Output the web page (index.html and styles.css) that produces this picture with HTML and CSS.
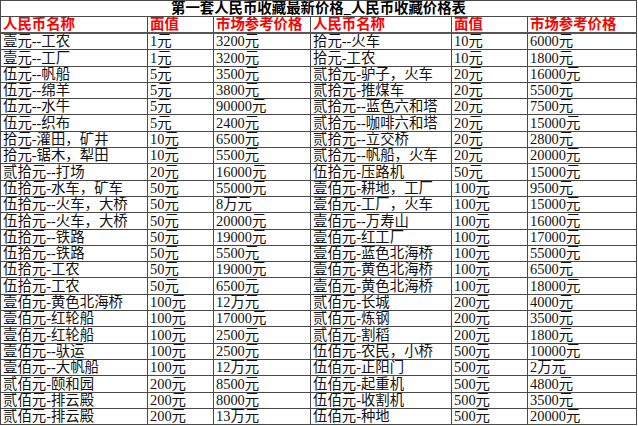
FILE: index.html
```html
<!DOCTYPE html>
<html lang="zh-CN">
<head>
<meta charset="utf-8">
<title>第一套人民币收藏最新价格</title>
<link rel="stylesheet" href="styles.css">
</head>
<body>
<table class="price-table">
  <colgroup>
    <col class="c-name"><col class="c-face"><col class="c-price">
    <col class="c-name2"><col class="c-face2"><col class="c-price2">
  </colgroup>
  <thead>
    <tr class="title-row"><th colspan="6">第一套人民币收藏最新价格_人民币收藏价格表</th></tr>
    <tr class="head-row">
      <th>人民币名称</th><th>面值</th><th>市场参考价格</th>
      <th>人民币名称</th><th>面值</th><th>市场参考价格</th>
    </tr>
  </thead>
  <tbody>
    <tr><td>壹元--工农</td><td>1元</td><td>3200元</td><td>拾元--火车</td><td>10元</td><td>6000元</td></tr>
    <tr><td>壹元--工厂</td><td>1元</td><td>3200元</td><td>拾元-工农</td><td>10元</td><td>1800元</td></tr>
    <tr><td>伍元--帆船</td><td>5元</td><td>3500元</td><td>贰拾元-驴子，火车</td><td>20元</td><td>16000元</td></tr>
    <tr><td>伍元--绵羊</td><td>5元</td><td>3800元</td><td>贰拾元-推煤车</td><td>20元</td><td>5500元</td></tr>
    <tr><td>伍元--水牛</td><td>5元</td><td>90000元</td><td>贰拾元--蓝色六和塔</td><td>20元</td><td>7500元</td></tr>
    <tr><td>伍元--织布</td><td>5元</td><td>2400元</td><td>贰拾元--咖啡六和塔</td><td>20元</td><td>15000元</td></tr>
    <tr><td>拾元-灌田，矿井</td><td>10元</td><td>6500元</td><td>贰拾元--立交桥</td><td>20元</td><td>2800元</td></tr>
    <tr><td>拾元-锯木，犁田</td><td>10元</td><td>5500元</td><td>贰拾元--帆船，火车</td><td>20元</td><td>20000元</td></tr>
    <tr><td>贰拾元--打场</td><td>20元</td><td>16000元</td><td>伍拾元-压路机</td><td>50元</td><td>15000元</td></tr>
    <tr><td>伍拾元-水车，矿车</td><td>50元</td><td>55000元</td><td>壹佰元-耕地，工厂</td><td>100元</td><td>9500元</td></tr>
    <tr><td>伍拾元--火车，大桥</td><td>50元</td><td>8万元</td><td>壹佰元-工厂，火车</td><td>100元</td><td>15000元</td></tr>
    <tr><td>伍拾元--火车，大桥</td><td>50元</td><td>20000元</td><td>壹佰元--万寿山</td><td>100元</td><td>16000元</td></tr>
    <tr><td>伍拾元--铁路</td><td>50元</td><td>19000元</td><td>壹佰元-红工厂</td><td>100元</td><td>17000元</td></tr>
    <tr><td>伍拾元--铁路</td><td>50元</td><td>5500元</td><td>壹佰元-蓝色北海桥</td><td>100元</td><td>55000元</td></tr>
    <tr><td>伍拾元-工农</td><td>50元</td><td>19000元</td><td>壹佰元-黄色北海桥</td><td>100元</td><td>6500元</td></tr>
    <tr><td>伍拾元-工农</td><td>50元</td><td>6500元</td><td>壹佰元-黄色北海桥</td><td>100元</td><td>18000元</td></tr>
    <tr><td>壹佰元-黄色北海桥</td><td>100元</td><td>12万元</td><td>贰佰元-长城</td><td>200元</td><td>4000元</td></tr>
    <tr><td>壹佰元-红轮船</td><td>100元</td><td>17000元</td><td>贰佰元-炼钢</td><td>200元</td><td>3500元</td></tr>
    <tr><td>壹佰元-红轮船</td><td>100元</td><td>2500元</td><td>贰佰元-割稻</td><td>200元</td><td>1800元</td></tr>
    <tr><td>壹佰元--驮运</td><td>100元</td><td>2500元</td><td>伍佰元-农民，小桥</td><td>500元</td><td>10000元</td></tr>
    <tr><td>壹佰元--大帆船</td><td>100元</td><td>12万元</td><td>伍佰元-正阳门</td><td>500元</td><td>2万元</td></tr>
    <tr><td>贰佰元-颐和园</td><td>200元</td><td>8500元</td><td>伍佰元-起重机</td><td>500元</td><td>4800元</td></tr>
    <tr><td>贰佰元-排云殿</td><td>200元</td><td>8000元</td><td>伍佰元-收割机</td><td>500元</td><td>3500元</td></tr>
    <tr><td>贰佰元-排云殿</td><td>200元</td><td>13万元</td><td>伍佰元-种地</td><td>500元</td><td>20000元</td></tr>
  </tbody>
</table>
</body>
</html>
```
FILE: styles.css
```css
html, body {
  margin: 0;
  padding: 0;
  background: #ffffff;
}

.price-table {
  border-collapse: collapse;
  table-layout: fixed;
  width: 636px;
  font-family: "Liberation Serif", "Noto Sans CJK SC", serif;
  font-size: 14.4px;
  color: #111111;
}

.c-name { width: 147px; }
.c-face { width: 66px; }
.c-price { width: 97px; }
.c-name2 { width: 141px; }
.c-face2 { width: 76px; }
.c-price2 { width: 109px; }

.price-table th,
.price-table td {
  border: 1px solid #4a4a4a;
  padding: 0 2px;
  text-align: left;
  vertical-align: bottom;
  white-space: nowrap;
  overflow: hidden;
  line-height: 15px;
}

.price-table td {
  height: 15.3px;
  font-weight: normal;
}

.title-row th {
  height: 15px;
  text-align: center;
  font-weight: bold;
  color: #000000;
}

.head-row th {
  height: 15px;
  color: #ff0000;
  font-weight: bold;
  border-bottom: 2px solid #555555;
}
```
